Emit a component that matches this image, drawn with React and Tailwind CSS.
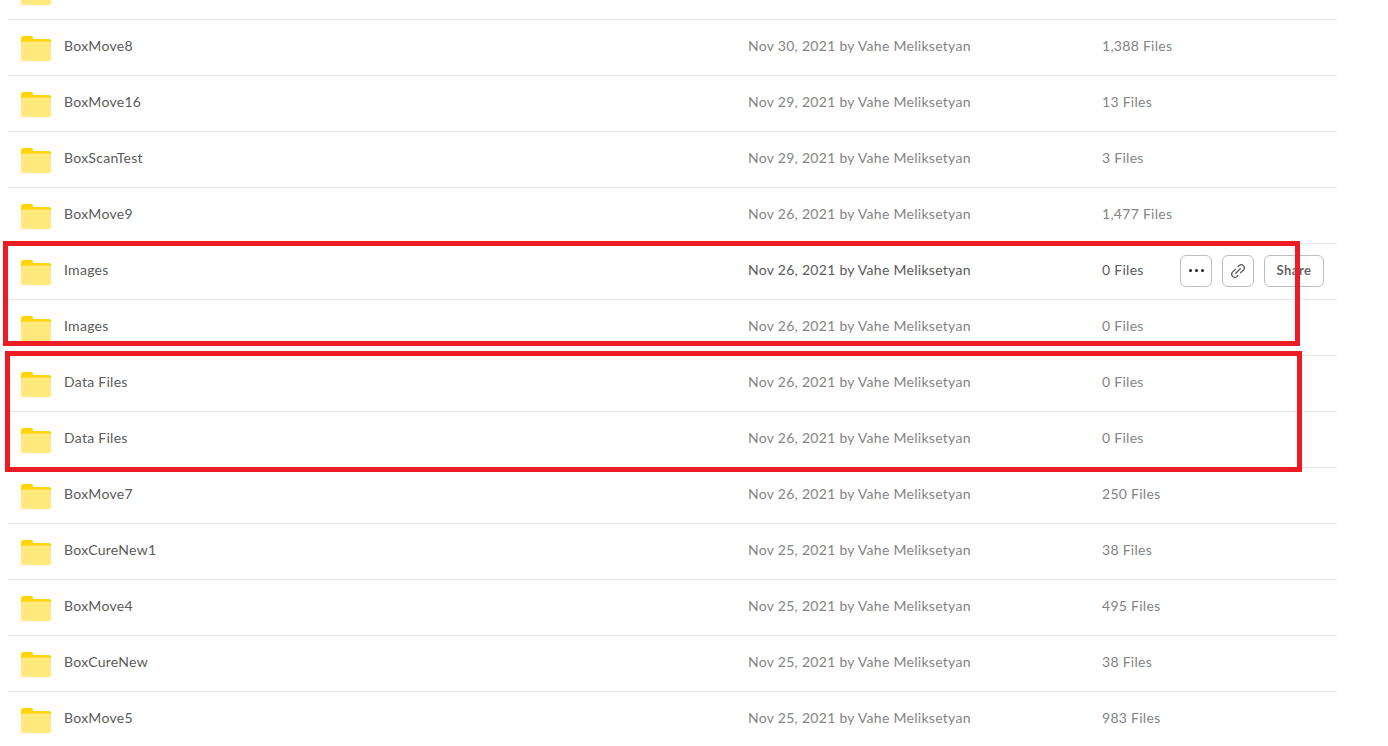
import React from "react";

const rows = [
  { name: "BoxMove3", date: "Nov 30, 2021", files: "12 Files" },
  { name: "BoxMove8", date: "Nov 30, 2021", files: "1,388 Files" },
  { name: "BoxMove16", date: "Nov 29, 2021", files: "13 Files" },
  { name: "BoxScanTest", date: "Nov 29, 2021", files: "3 Files" },
  { name: "BoxMove9", date: "Nov 26, 2021", files: "1,477 Files" },
  { name: "Images", date: "Nov 26, 2021", files: "0 Files", hover: true },
  { name: "Images", date: "Nov 26, 2021", files: "0 Files" },
  { name: "Data Files", date: "Nov 26, 2021", files: "0 Files" },
  { name: "Data Files", date: "Nov 26, 2021", files: "0 Files" },
  { name: "BoxMove7", date: "Nov 26, 2021", files: "250 Files" },
  { name: "BoxCureNew1", date: "Nov 25, 2021", files: "38 Files" },
  { name: "BoxMove4", date: "Nov 25, 2021", files: "495 Files" },
  { name: "BoxCureNew", date: "Nov 25, 2021", files: "38 Files" },
  { name: "BoxMove5", date: "Nov 25, 2021", files: "983 Files" },
];

function Folder() {
  return (
    <svg width="30" height="25" viewBox="0 0 30 25" className="shrink-0 mt-[1px]">
      <path d="M0 3a3 3 0 0 1 3-3h6c1.500 0 2.200.6 3 1.500L13 3h14a3 3 0 0 1 3 3v6H0z" fill="#ffd400" />
      <rect x="0" y="3" width="30" height="22" rx="3" fill="#ffd400" />
      <path d="M0 8a2.500 2.500 0 0 1 2.500-2.500h25a2.500 2.500 0 0 1 2.500 2.500V21.500a3.500 3.500 0 0 1-3.500 3.500h-23a3.500 3.500 0 0 1-3.500-3.500z" fill="#ffe97f" />
    </svg>
  );
}

function LinkIcon() {
  return (
    <svg width="18" height="18" viewBox="0 0 16 16" fill="none" stroke="#555555" strokeWidth="1.05" strokeLinecap="round">
      <path d="M5.800 6.300 2.900 9.200a2.800 2.800 0 0 0 3.900 3.900l1.100-1.100" />
      <path d="M10.200 9.700l2.900-2.900a2.800 2.800 0 0 0-3.900-3.900L8.100 4" />
      <path d="M6 10l4-4" />
    </svg>
  );
}

function Row({ row }) {
  return (
    <div className={`flex items-center h-[56px] pl-[13px] border-b border-[#e8e8e8] ${row.hover ? "text-[#5a5a5a]" : "text-[#848484]"}`}>
      <Folder />
      <div className="w-[697px] pl-[13px] mb-[4px] text-[#5a5a5a]">{row.name}</div>
      <div className="w-[354px] mb-[4px]">{row.date} by Vahe Meliksetyan</div>
      <div className="w-[78px] mb-[4px]">{row.files}</div>
      {row.hover && (
        <div className="flex items-center gap-[10px] mb-[2px]">
          <button className="flex items-center justify-center gap-[3px] w-[32px] h-[32px] rounded-md border border-[#bdbdbd] bg-white">
            <span className="w-[3px] h-[3px] rounded-full bg-[#222222]" />
            <span className="w-[3px] h-[3px] rounded-full bg-[#222222]" />
            <span className="w-[3px] h-[3px] rounded-full bg-[#222222]" />
          </button>
          <button className="flex items-center justify-center w-[32px] h-[32px] rounded-md border border-[#bdbdbd] bg-white">
            <LinkIcon />
          </button>
          <button className="w-[60px] h-[32px] pb-[2px] rounded-md border border-[#bdbdbd] bg-white font-bold text-[13px] tracking-[0.5px] text-[#666666]">
            Share
          </button>
        </div>
      )}
    </div>
  );
}

export default function App() {
  return (
    <div className="relative h-[746px] overflow-hidden bg-white font-['Lato','Noto_Sans',sans-serif] text-[14px] tracking-[0.28px] leading-5">
      <div className="ml-[8px] w-[1329px] -mt-[36px]">
        {rows.map((row, i) => (
          <Row key={i} row={row} />
        ))}
      </div>
      {/* red annotation boxes drawn over the list */}
      <div className="absolute left-[3px] top-[241px] w-[1297px] h-[105px] border-[5px] border-[#ed1c24]" />
      <div className="absolute left-[5px] top-[351px] w-[1297px] h-[121px] border-[5px] border-[#ed1c24]" />
    </div>
  );
}
